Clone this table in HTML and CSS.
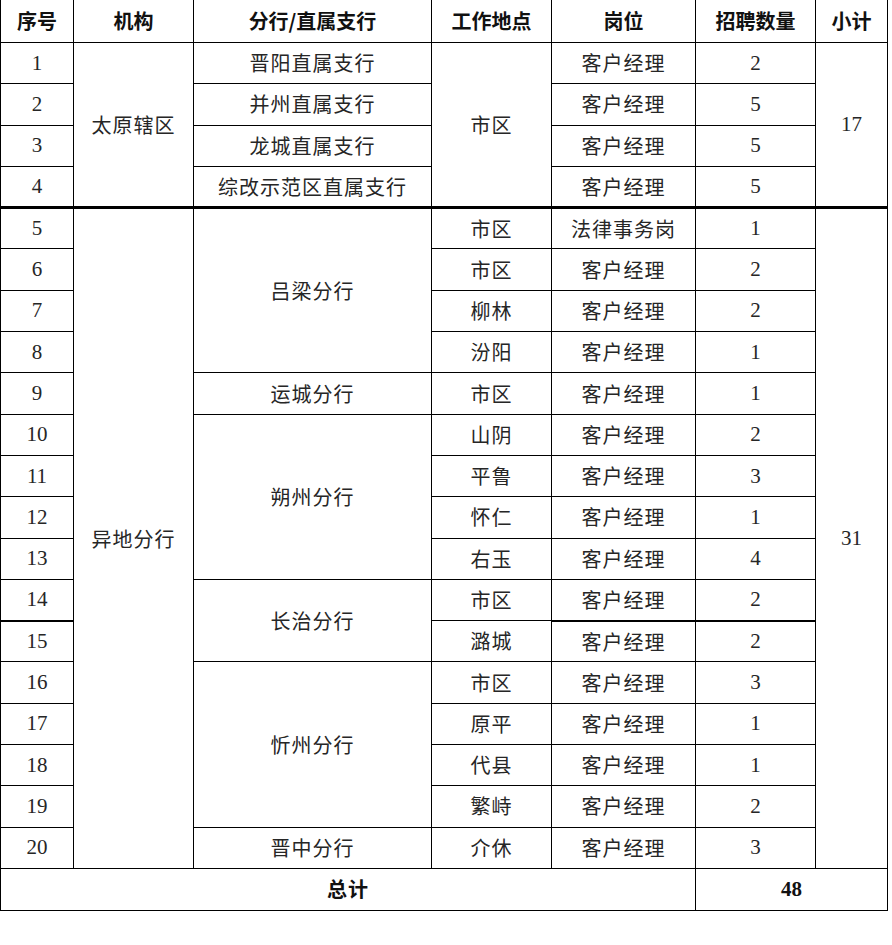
FILE: index.html
```html
<!DOCTYPE html>
<html lang="zh-CN">
<head>
<meta charset="utf-8">
<title>招聘岗位表</title>
<link rel="stylesheet" href="styles.css">
</head>
<body>
<table class="grid">
  <colgroup>
    <col class="c1"><col class="c2"><col class="c3"><col class="c4"><col class="c5"><col class="c6"><col class="c7">
  </colgroup>
  <thead>
    <tr class="head">
      <th>序号</th><th>机构</th><th>分行/直属支行</th><th>工作地点</th><th>岗位</th><th>招聘数量</th><th>小计</th>
    </tr>
  </thead>
  <tbody>
    <tr><td class="num">1</td><td rowspan="4">太原辖区</td><td>晋阳直属支行</td><td rowspan="4">市区</td><td>客户经理</td><td class="num">2</td><td rowspan="4" class="num">17</td></tr>
    <tr><td class="num">2</td><td>并州直属支行</td><td>客户经理</td><td class="num">5</td></tr>
    <tr><td class="num">3</td><td>龙城直属支行</td><td>客户经理</td><td class="num">5</td></tr>
    <tr><td class="num">4</td><td>综改示范区直属支行</td><td>客户经理</td><td class="num">5</td></tr>
    <tr class="sep"><td class="num">5</td><td rowspan="16">异地分行</td><td rowspan="4">吕梁分行</td><td>市区</td><td>法律事务岗</td><td class="num">1</td><td rowspan="16" class="num">31</td></tr>
    <tr><td class="num">6</td><td>市区</td><td>客户经理</td><td class="num">2</td></tr>
    <tr><td class="num">7</td><td>柳林</td><td>客户经理</td><td class="num">2</td></tr>
    <tr><td class="num">8</td><td>汾阳</td><td>客户经理</td><td class="num">1</td></tr>
    <tr><td class="num">9</td><td>运城分行</td><td>市区</td><td>客户经理</td><td class="num">1</td></tr>
    <tr><td class="num">10</td><td rowspan="4">朔州分行</td><td>山阴</td><td>客户经理</td><td class="num">2</td></tr>
    <tr><td class="num">11</td><td>平鲁</td><td>客户经理</td><td class="num">3</td></tr>
    <tr><td class="num">12</td><td>怀仁</td><td>客户经理</td><td class="num">1</td></tr>
    <tr><td class="num">13</td><td>右玉</td><td>客户经理</td><td class="num">4</td></tr>
    <tr><td class="num">14</td><td rowspan="2">长治分行</td><td>市区</td><td>客户经理</td><td class="num">2</td></tr>
    <tr class="sep-lite"><td class="num">15</td><td>潞城</td><td>客户经理</td><td class="num">2</td></tr>
    <tr><td class="num">16</td><td rowspan="4">忻州分行</td><td>市区</td><td>客户经理</td><td class="num">3</td></tr>
    <tr><td class="num">17</td><td>原平</td><td>客户经理</td><td class="num">1</td></tr>
    <tr><td class="num">18</td><td>代县</td><td>客户经理</td><td class="num">1</td></tr>
    <tr><td class="num">19</td><td>繁峙</td><td>客户经理</td><td class="num">2</td></tr>
    <tr><td class="num">20</td><td>晋中分行</td><td>介休</td><td>客户经理</td><td class="num">3</td></tr>
  </tbody>
  <tfoot>
    <tr class="total"><td colspan="5">总计</td><td colspan="2" class="num">48</td></tr>
  </tfoot>
</table>
</body>
</html>
```

FILE: styles.css
```css
html, body {
  margin: 0;
  padding: 0;
  background: #ffffff;
}

.grid {
  border-collapse: collapse;
  table-layout: fixed;
  width: 887px;
  margin-top: -1px;
  font-family: "Liberation Serif", "Noto Sans CJK SC", serif;
  font-size: 20px;
  color: #262626;
}

.c1 { width: 73px; }
.c2 { width: 120px; }
.c3 { width: 238px; }
.c4 { width: 120px; }
.c5 { width: 144px; }
.c6 { width: 120px; }
.c7 { width: 72px; }

.grid th,
.grid td {
  border: 1px solid #000;
  padding: 0;
  text-align: center;
  vertical-align: middle;
  line-height: 1;
}

.grid td {
  font-family: "Noto Sans CJK SC", sans-serif;
  font-weight: 400;
  letter-spacing: 1px;
}

.grid td.num {
  font-family: "Liberation Serif", serif;
  font-size: 21px;
  letter-spacing: 0;
}

.head th {
  height: 42px;
  font-family: "Noto Sans CJK SC", sans-serif;
  font-weight: 700;
  font-size: 20px;
  color: #111;
}

tbody tr {
  height: 41.3px;
}

.sep td {
  border-top: 3px solid #000;
}

.sep-lite td:nth-child(1),
.sep-lite td:nth-child(3),
.sep-lite td:nth-child(4) {
  border-top: 2px solid #000;
}

.total td {
  height: 41px;
  font-family: "Noto Sans CJK SC", sans-serif;
  font-weight: 700;
  color: #111;
}

.total td.num {
  font-family: "Liberation Serif", serif;
  font-weight: 700;
  font-size: 21px;
}
```
